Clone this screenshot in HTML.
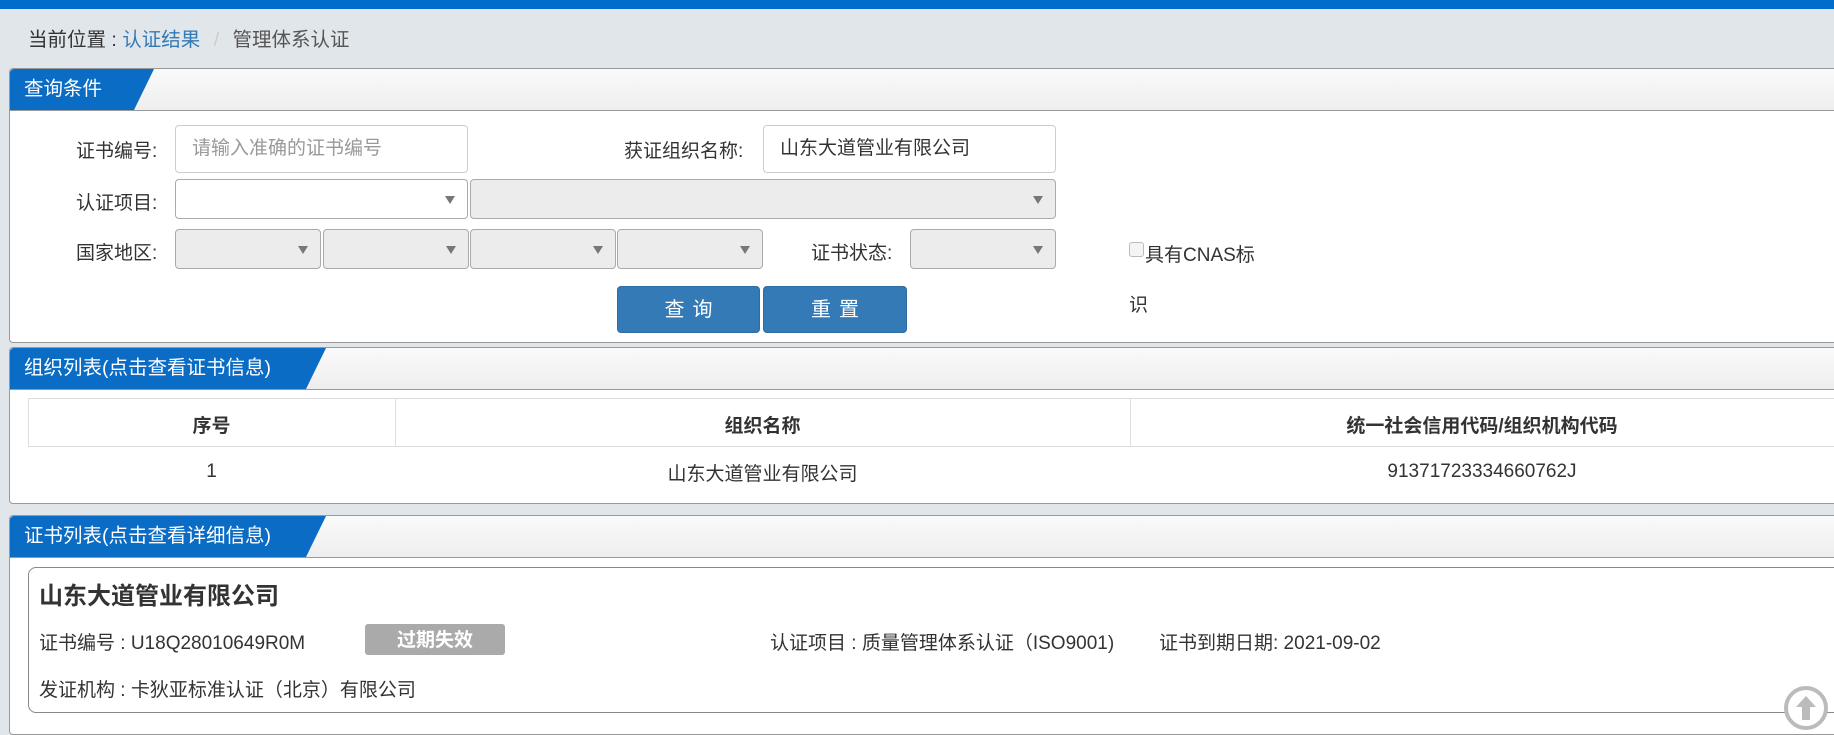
<!DOCTYPE html>
<html><head><meta charset="utf-8"><style>
*{box-sizing:border-box;margin:0;padding:0}
body{width:1834px;height:718px;overflow:hidden;background:#e1e6ea;font-family:"Liberation Sans","Noto Sans CJK SC",sans-serif;font-size:19px;color:#333;position:relative}
.abs{position:absolute}
.top{left:0;top:0;width:1834px;height:9px;background:#006dcc}
.panel{position:absolute;left:9px;width:1840px;background:#fff;border:1px solid #999;border-radius:4px}
.hd{height:42px;background:linear-gradient(#fafafa,#eee);border-bottom:1px solid #999;position:relative;border-radius:4px 0 0 0}
.tab{position:absolute;left:0;top:0;height:41px;background:#0a6cc4;color:#fff;padding-left:14px;line-height:41px;font-size:19.5px;clip-path:polygon(0 0,100% 0,calc(100% - 20px) 100%,0 100%);border-radius:4px 0 0 0}
.inp{position:absolute;border:1px solid #ccc;border-radius:4px;background:#fff;padding-left:16px;line-height:46px;font-size:19px}
.sel{position:absolute;border:1px solid #aaa;border-radius:4px;background:#ececec;height:40px}
.sel:after{content:"";position:absolute;right:12px;top:16px;border:5px solid transparent;border-top:8px solid #777}
.lbl{position:absolute;font-size:19px}
.btn{position:absolute;background:#337ab7;border:1px solid #2e6da4;border-radius:4px;color:#fff;text-align:center;line-height:46px;font-size:20px;letter-spacing:8px;padding-left:8px}
</style></head><body>
<div class="abs top"></div>
<div class="abs" style="left:28px;top:23px;font-size:19.5px">当前位置 : <span style="color:#337ab7">认证结果</span> <span style="color:#ccc;margin:0 8px">/</span> <span style="color:#555">管理体系认证</span></div>

<div class="panel" style="top:68px;height:275px">
 <div class="hd"><div class="tab" style="width:144px">查询条件</div></div>
</div>
<div class="lbl" style="left:76px;top:136px">证书编号:</div>
<div class="inp" style="left:175px;top:125px;width:293px;height:48px;color:#999">请输入准确的证书编号</div>
<div class="lbl" style="left:624px;top:136px">获证组织名称:</div>
<div class="inp" style="left:763px;top:125px;width:293px;height:48px">山东大道管业有限公司</div>
<div class="lbl" style="left:76px;top:188px">认证项目:</div>
<div class="sel" style="left:175px;top:179px;width:293px;background:#fff"></div>
<div class="sel" style="left:470px;top:179px;width:586px"></div>
<div class="lbl" style="left:76px;top:238px">国家地区:</div>
<div class="sel" style="left:175px;top:229px;width:146px"></div>
<div class="sel" style="left:323px;top:229px;width:146px"></div>
<div class="sel" style="left:470px;top:229px;width:146px"></div>
<div class="sel" style="left:617px;top:229px;width:146px"></div>
<div class="lbl" style="left:811px;top:238px">证书状态:</div>
<div class="sel" style="left:910px;top:229px;width:146px"></div>
<div class="abs" style="left:1129px;top:242px;width:15px;height:15px;border:1px solid #bbb;border-radius:3px;background:#f4f4f4"></div>
<div class="lbl" style="left:1145px;top:240px">具有CNAS标</div>
<div class="lbl" style="left:1129px;top:290px">识</div>
<div class="btn" style="left:617px;top:286px;width:143px;height:47px">查询</div>
<div class="btn" style="left:763px;top:286px;width:144px;height:47px">重置</div>

<div class="panel" style="top:347px;height:157px">
 <div class="hd"><div class="tab" style="width:316px">组织列表(点击查看证书信息)</div></div>
</div>
<div class="abs" style="left:28px;top:398px;width:1820px;height:49px;border:1px solid #ddd;border-right:none"></div>
<div class="abs" style="left:395px;top:398px;width:1px;height:49px;background:#ddd"></div>
<div class="abs" style="left:1130px;top:398px;width:1px;height:49px;background:#ddd"></div>
<div class="abs" style="left:28px;top:411px;width:367px;text-align:center;font-weight:bold">序号</div>
<div class="abs" style="left:395px;top:411px;width:735px;text-align:center;font-weight:bold">组织名称</div>
<div class="abs" style="left:1130px;top:411px;width:704px;text-align:center;font-weight:bold">统一社会信用代码/组织机构代码</div>
<div class="abs" style="left:28px;top:461px;width:367px;text-align:center">1</div>
<div class="abs" style="left:395px;top:459px;width:735px;text-align:center">山东大道管业有限公司</div>
<div class="abs" style="left:1130px;top:461px;width:704px;text-align:center">91371723334660762J</div>

<div class="panel" style="top:515px;height:220px">
 <div class="hd"><div class="tab" style="width:316px">证书列表(点击查看详细信息)</div></div>
</div>
<div class="abs" style="left:28px;top:567px;width:1830px;height:146px;border:1px solid #888;border-radius:8px;background:#fff"></div>
<div class="abs" style="left:39px;top:576px;font-size:24px;font-weight:bold">山东大道管业有限公司</div>
<div class="lbl" style="left:39px;top:628px">证书编号 : U18Q28010649R0M</div>
<div class="abs" style="left:365px;top:624px;width:140px;height:31px;background:#aaa;border-radius:3px;color:#fff;font-weight:bold;text-align:center;line-height:33px;font-size:19px">过期失效</div>
<div class="lbl" style="left:770px;top:628px">认证项目 : 质量管理体系认证（ISO9001)</div>
<div class="lbl" style="left:1159px;top:628px">证书到期日期: 2021-09-02</div>
<div class="lbl" style="left:39px;top:675px">发证机构 : 卡狄亚标准认证（北京）有限公司</div>
<div class="abs" style="left:1784px;top:686px;width:44px;height:44px;border:4px solid #bbb;border-radius:50%;background:#fff">
<svg width="36" height="36" viewBox="0 0 36 36" style="position:absolute;left:0;top:0"><path d="M18 6 L28 17 H22 V30 H14 V17 H8 Z" fill="#bbb"/></svg></div>
</body></html>
